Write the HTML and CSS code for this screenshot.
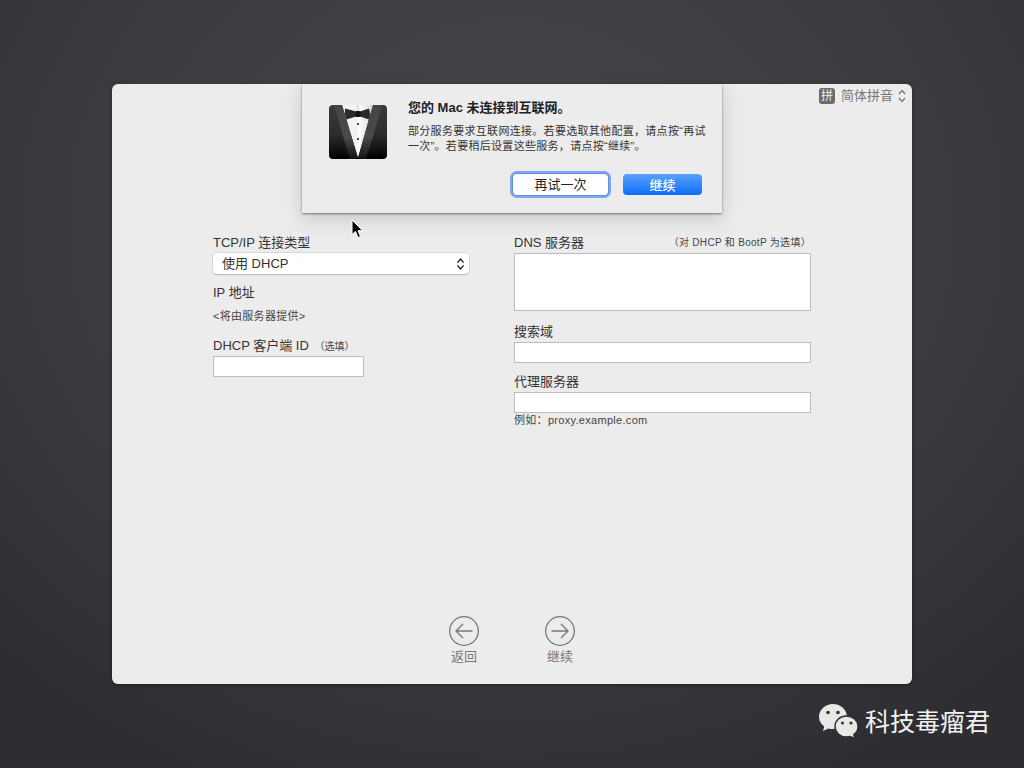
FILE: index.html
```html
<!DOCTYPE html>
<html lang="zh-CN">
<head>
<meta charset="utf-8">
<title>网络设置</title>
<link rel="stylesheet" href="styles.css">
</head>
<body>
<main class="panel">
  <div class="ime">
    <span class="ime-badge">拼</span>
    <span class="ime-name">简体拼音</span>
    <svg class="ime-arrows" width="8" height="14" viewBox="0 0 8 14"><path d="M1 5l3-3.500 3 3.500M1 9l3 3.500 3-3.500" fill="none" stroke="#777" stroke-width="1.200"/></svg>
  </div>

  <section class="dialog">
    <svg class="tux" width="60" height="56" viewBox="0 0 60 56">
      <defs>
        <linearGradient id="jacket" x1="0" y1="0" x2="0" y2="1"><stop offset="0" stop-color="#3a3a3a"/><stop offset=".55" stop-color="#2c2c2c"/><stop offset="1" stop-color="#000"/></linearGradient>
        <linearGradient id="lapel" x1="0" y1="0" x2="0" y2="1"><stop offset="0" stop-color="#454545"/><stop offset=".6" stop-color="#4a4a4a"/><stop offset="1" stop-color="#111"/></linearGradient>
        <linearGradient id="shade" x1="0" y1="0" x2="1" y2="0"><stop offset="0" stop-color="#fff"/><stop offset="1" stop-color="#d8d8d8"/></linearGradient>
      </defs>
      <rect x="1" y="1" width="58" height="54" rx="4" fill="url(#jacket)"/>
      <path d="M14 1H30V54Z" fill="#f2f2f2"/>
      <path d="M30 1H45L30 54Z" fill="url(#shade)"/>
      <path d="M30 1V12" stroke="#aaa" stroke-width=".6"/>
      <path d="M6 1H14L30 54 27 55H22Q13 26 6 1ZM54 1H45L30 54 33 55H38Q47 26 54 1Z" fill="url(#lapel)"/>
      <path d="M17 4.500Q25 6.500 28 7.500H32Q35 6.500 41 4.500Q43 10 41 15.500Q35 13.500 32 12.500H28Q25 13.500 18.500 15.500Q16 10 17 4.500Z" fill="#2b2b2b"/>
      <rect x="27.500" y="7" width="5" height="6" rx="1" fill="#151515"/>
      <circle cx="30" cy="20" r="1.100" fill="#222"/>
      <circle cx="30" cy="35" r="1.100" fill="#222"/>
    </svg>
    <div class="dialog-body">
      <h1 class="dialog-title">您的 Mac 未连接到互联网。</h1>
      <p class="dialog-text">部分服务要求互联网连接。若要选取其他配置，请点按“再试一次”。若要稍后设置这些服务，请点按“继续”。</p>
      <div class="dialog-actions">
        <button class="btn btn-focus">再试一次</button>
        <button class="btn btn-primary">继续</button>
      </div>
    </div>
  </section>

  <form class="form">
    <div class="col col-left">
      <label class="label">TCP/IP 连接类型</label>
      <div class="select"><span class="select-text">使用 DHCP</span>
        <svg width="9" height="14" viewBox="0 0 9 14"><path d="M1.500 5.500L4.500 2l3 3.500M1.500 8.500L4.500 12l3-3.500" fill="none" stroke="#222" stroke-width="1.300"/></svg>
      </div>
      <div class="label label-ip">IP 地址</div>
      <div class="small value">&lt;将由服务器提供&gt;</div>
      <label class="label label-client">DHCP 客户端 ID <span class="small note">（选填）</span></label>
      <div class="field field-short"></div>
    </div>
    <div class="col col-right">
      <div class="label-row">
        <label class="label">DNS 服务器</label>
        <span class="small">（对 DHCP 和 BootP 为选填）</span>
      </div>
      <div class="field field-tall"></div>
      <label class="label label-search">搜索域</label>
      <div class="field"></div>
      <label class="label label-proxy">代理服务器</label>
      <div class="field"></div>
      <div class="small hint">例如：proxy.example.com</div>
    </div>
  </form>

  <nav class="nav">
    <div class="nav-item">
      <svg width="32" height="32" viewBox="0 0 32 32"><circle cx="16" cy="16" r="14.300" fill="none" stroke="#777" stroke-width="1.300"/><path d="M24.500 16H8M15 9l-7 7 7 7" fill="none" stroke="#777" stroke-width="1.300"/></svg>
      <span>返回</span>
    </div>
    <div class="nav-item">
      <svg width="32" height="32" viewBox="0 0 32 32"><circle cx="16" cy="16" r="14.300" fill="none" stroke="#777" stroke-width="1.300"/><path d="M7.500 16H24M17 9l7 7-7 7" fill="none" stroke="#777" stroke-width="1.300"/></svg>
      <span>继续</span>
    </div>
  </nav>
</main>

<svg class="cursor" width="14" height="20" viewBox="0 0 14 20"><path d="M1 1V15.500L4.500 12.500 7 18.500 9.500 17.500 7 11.700H11.500Z" fill="#000" stroke="#fff" stroke-width="1"/></svg>

<div class="mark">
  <svg width="40" height="36" viewBox="0 0 40 36">
    <path d="M14 1C6.300 1 0 6.700 0 13.800c0 4 2 7.500 5.200 9.800L4 28l5.300-2.600c1.500.4 3 .6 4.700.6 7.700 0 14-5.700 14-12.200C28 6.700 21.700 1 14 1Z" fill="#e8e8e8"/>
    <circle cx="9" cy="9.500" r="1.800" fill="#333"/><circle cx="19" cy="9.500" r="1.800" fill="#333"/>
    <path d="M39 23.500c0-5.800-5.100-10.500-11.500-10.500S16 17.700 16 23.500 21.100 34 27.500 34c1.300 0 2.500-.2 3.700-.5l4.800 2-1.200-4c2.600-1.900 4.200-4.800 4.200-8Z" fill="#e8e8e8" stroke="#2e2e33" stroke-width="1.400"/>
    <circle cx="23.500" cy="20" r="1.600" fill="#333"/><circle cx="32" cy="20" r="1.600" fill="#333"/>
  </svg>
  <span class="mark-text">科技毒瘤君</span>
</div>
</body>
</html>
```
FILE: styles.css
```css
* { box-sizing: border-box; }
html, body { height: 100%; }
body {
  margin: 0;
  overflow: hidden;
  padding-top: 84px;
  background: radial-gradient(ellipse 720px 620px at 512px 220px, #47474e 0%, #3d3e43 50%, #2e2e32 100%);
  font-family: "Liberation Sans", "Noto Sans CJK SC", sans-serif;
  color: #333;
}
.panel {
  position: relative;
  width: 800px;
  height: 600px;
  margin: 0 auto;
  padding: 151px 101px 0;
  background: #ececec;
  border-radius: 6px;
  box-shadow: 0 1px 4px rgba(0, 0, 0, .35);
}
.ime {
  position: absolute;
  top: 4px;
  right: 6px;
  display: flex;
  align-items: center;
  height: 16px;
}
.ime-badge {
  width: 16px;
  height: 16px;
  border-radius: 3px;
  background: #6b6b6b;
  color: #eee;
  font-size: 12px;
  line-height: 16px;
  text-align: center;
}
.ime-name { margin-left: 6px; font-size: 13px; line-height: 16px; color: #777; }
.ime-arrows { margin-left: 5px; }

.dialog {
  position: absolute;
  top: 0;
  left: 190px;
  width: 420px;
  height: 129px;
  display: flex;
  padding: 20px 16px 0 26px;
  background: #ececec;
  box-shadow: 0 1px 2px rgba(0, 0, 0, .45), 0 6px 18px rgba(0, 0, 0, .16);
}
.tux { flex: none; }
.dialog-body { margin-left: 20px; flex: 1; }
.dialog-title { margin: -4px 0 0; font-size: 13px; line-height: 16px; font-weight: 700; color: #222; }
.dialog-text { margin: 8px 0 0; font-size: 11px; line-height: 14.500px; letter-spacing: .3px; color: #333; width: 299px; }
.dialog-actions { display: flex; justify-content: flex-end; gap: 15px; margin-top: 21px; padding-right: 5px; }
.btn {
  height: 21px;
  padding: 0;
  border: 0;
  border-radius: 4px;
  font: inherit;
  font-size: 13px;
  line-height: 19px;
}
.btn-focus {
  width: 95px;
  background: #fff;
  color: #222;
  box-shadow: 0 0 0 1px #5d8fe0, 0 0 0 3px #7ea8ee;
}
.btn-primary {
  width: 79px;
  background: linear-gradient(180deg, #5ba2fb, #0d6dfd);
  color: #fff;
  font-family: "Noto Sans CJK SC", sans-serif;
  font-weight: 500;
}

.form { display: flex; gap: 45px; align-items: flex-start; }
.col { display: flex; flex-direction: column; }
.col-left { width: 256px; }
.col-right { width: 297px; }
.label { display: block; font-size: 13px; line-height: 16px; color: #333; }
.small { font-size: 11px; line-height: 14px; color: #444; letter-spacing: .3px; }
.select {
  display: flex;
  align-items: center;
  justify-content: space-between;
  height: 21px;
  margin-top: 2px;
  padding: 0 4px 0 9px;
  background: #fff;
  border-radius: 4px;
  box-shadow: 0 0 0 .5px #c2c2c2, 0 1px 1px rgba(0, 0, 0, .25);
  font-size: 13px;
  color: #333;
}
.select-text { margin-top: -2px; }
.label-ip { margin-top: 11px; }
.value { margin-top: 8px; }
.label-client { margin-top: 15px; }
.note { margin-left: 2px; font-size: 10px; letter-spacing: 0; }
.field {
  height: 21px;
  margin-top: 2px;
  background: #fff;
  border: 1px solid #bdbdbd;
}
.field-short { width: 151px; }
.field-tall { height: 58px; }
.label-row { display: flex; justify-content: space-between; align-items: center; }
.label-row .small { font-size: 10px; letter-spacing: .3px; }
.label-search { margin-top: 13px; }
.label-proxy { margin-top: 11px; }
.hint { margin-top: 0; }

.nav {
  position: absolute;
  left: 336px;
  top: 531px;
  display: flex;
  gap: 64px;
}
.nav-item { display: flex; flex-direction: column; align-items: center; width: 32px; color: #777; font-size: 13px; line-height: 16px; }
.nav-item span { margin-top: 2px; }

.cursor { position: absolute; left: 351px; top: 219px; }
.mark {
  position: absolute;
  left: 819px;
  top: 703px;
  display: flex;
  align-items: center;
  gap: 6px;
  color: #f2f2f2;
  font-family: "Noto Sans CJK SC", sans-serif;
  font-size: 25px;
  line-height: 36px;
}
.mark-text { margin-top: -2px; }
```
